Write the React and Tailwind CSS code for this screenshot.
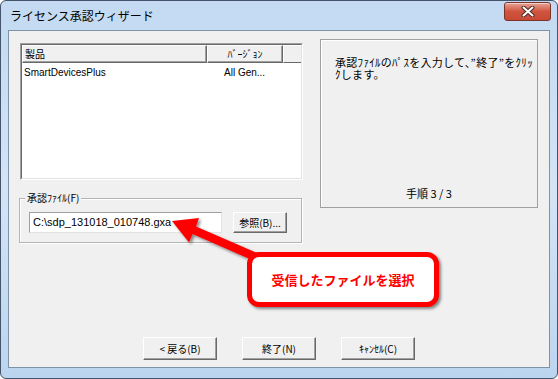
import React from "react";

const btn =
  "flex items-center justify-center bg-[#f0f0f0] border border-t-white border-l-white border-r-[#696969] border-b-[#696969] shadow-[inset_-1px_-1px_0_#a0a0a0] text-[10px] leading-none text-black";

const jp = "font-['Noto_Sans_CJK_JP',sans-serif]";

const CloseGlyph = () => (
  <svg width="14" height="11" viewBox="0 0 14 11">
    <path d="M2.5 1.5 L11.5 9.5 M11.5 1.5 L2.5 9.5" stroke="#4a2a26" strokeWidth="4" strokeLinecap="round" />
    <path d="M2.5 1.5 L11.5 9.5 M11.5 1.5 L2.5 9.5" stroke="#ffffff" strokeWidth="2" strokeLinecap="round" />
  </svg>
);

const App = () => {
  return (
    <div className="w-[558px] h-[379px] bg-white font-['Liberation_Sans','Noto_Sans_CJK_JP',sans-serif]">
      <div className="relative w-[558px] h-[379px] rounded-[6px] border border-[#44546a] bg-gradient-to-b from-[#c3daf2] via-[#d3e4f6] to-[#bcd5ef] flex flex-col">
        {/* title bar */}
        <div className="h-[29px] flex items-start justify-between pr-[6px]">
          <span className={"ml-[9px] mt-[7px] text-[12px] leading-[16px] text-black " + jp}>
            ライセンス承認ウィザード
          </span>
          <div className="mt-px w-[47px] h-[19px] rounded-[3px] border border-[#7b3328] bg-gradient-to-b from-[#e6a397] via-[#d0533d] to-[#c84a35] flex items-center justify-center shadow-[inset_0_1px_0_rgba(255,255,255,0.5)]">
            <CloseGlyph />
          </div>
        </div>

        {/* client area */}
        <div className="mx-[7px] h-[338px] bg-[#f0f0f0] border border-[#7e92a8] flex flex-col">
          <div className="flex items-start pt-[8px] pl-[11px]">
            <div className="flex flex-col mt-[4px]">
              {/* list view */}
              <div className="w-[283px] h-[137px] border border-t-[#a0a0a0] border-l-[#a0a0a0] border-r-white border-b-white">
                <div className="w-full h-full bg-white border border-t-[#696969] border-l-[#696969] border-r-[#e3e3e3] border-b-[#e3e3e3] overflow-hidden">
                  <div className={"flex h-[18px] bg-[#f0f0f0] text-[10px] leading-none " + jp}>
                    <div className="w-[185px] shrink-0 flex items-center pl-[2px] border border-t-white border-l-white border-r-[#696969] border-b-[#696969] shadow-[inset_-1px_-1px_0_#a0a0a0]">
                      製品
                    </div>
                    <div className="w-[76px] shrink-0 flex items-center justify-center border border-t-white border-l-white border-r-[#696969] border-b-[#696969] shadow-[inset_-1px_-1px_0_#a0a0a0]">
                      ﾊﾞｰｼﾞｮﾝ
                    </div>
                    <div className="flex-1 border border-t-white border-l-white border-b-[#696969] border-r-0" />
                  </div>
                  <div className="flex pt-[4px] text-[10px] leading-[12px] text-black">
                    <span className="w-[202px] shrink-0 pl-[2px]">SmartDevicesPlus</span>
                    <span>All Gen...</span>
                  </div>
                </div>
              </div>

              {/* group box */}
              <div className="relative mt-[18px] -ml-px w-[283px] h-[45px] border border-[#b4b4b4] shadow-[1px_1px_0_#ffffff,inset_1px_1px_0_#ffffff] flex items-start pt-[13px] pl-[9px]">
                <span className={"absolute left-[5px] -top-[7px] px-[2px] bg-[#f0f0f0] text-[10px] leading-[12px] " + jp}>
                  承認ﾌｧｲﾙ(F)
                </span>
                <div className="w-[193px] h-[21px] bg-white border border-t-[#a0a0a0] border-l-[#a0a0a0] border-r-[#e3e3e3] border-b-[#e3e3e3] flex items-center pl-[3px] text-[11px] leading-none text-black">
                  C:\sdp_131018_010748.gxa
                </div>
                <div className={btn + " ml-[11px] w-[54px] h-[21px] " + jp}>参照(B)...</div>
              </div>
            </div>

            {/* step panel */}
            <div className={"ml-[17px] w-[218px] h-[169px] border border-[#a0a0a0] shadow-[inset_1px_1px_0_#ffffff] flex flex-col text-[11px] leading-[12px] text-black " + jp}>
              <p className="pl-[14px] pt-[16px] pr-[2px] whitespace-nowrap tracking-[0.3px]">
                承認ﾌｧｲﾙのﾊﾟｽを入力して、”終了”をｸﾘｯ
                <br />
                ｸします。
              </p>
              <p className="mt-auto pb-[8px] text-center">手順 3 / 3</p>
            </div>
          </div>

          {/* wizard buttons */}
          <div className={"mt-auto pb-[7px] flex justify-center gap-[25px] " + jp}>
            <div className={btn + " w-[74px] h-[23px]"}>&lt; 戻る(B)</div>
            <div className={btn + " w-[74px] h-[23px]"}>終了(N)</div>
            <div className={btn + " w-[74px] h-[23px]"}>ｷｬﾝｾﾙ(C)</div>
          </div>
        </div>

        {/* annotation overlay */}
        <div className="absolute -left-px -top-px w-[558px] h-[379px] pointer-events-none">
          <svg className="absolute left-0 top-0" width="558" height="379" viewBox="0 0 558 379">
            <defs>
              <filter id="sh" x="-20%" y="-20%" width="140%" height="140%">
                <feDropShadow dx="2" dy="2" stdDeviation="1.5" floodColor="#000" floodOpacity="0.45" />
              </filter>
            </defs>
            <polygon
              points="172,221 199,218 196,226.6 264,256 261,264 192.6,234 189,242.5"
              fill="#ff0000"
              filter="url(#sh)"
            />
          </svg>
          <div className="absolute left-[247px] top-[252px] w-[192px] h-[55px] rounded-[12px] border-[5px] border-[#ff0000] bg-white shadow-[2px_2px_3px_rgba(0,0,0,0.45)] flex items-center justify-center">
            <span className={"text-[13px] font-bold leading-none text-[#ff0000] " + jp}>
              受信したファイルを選択
            </span>
          </div>
        </div>
      </div>
    </div>
  );
};

export default App;
